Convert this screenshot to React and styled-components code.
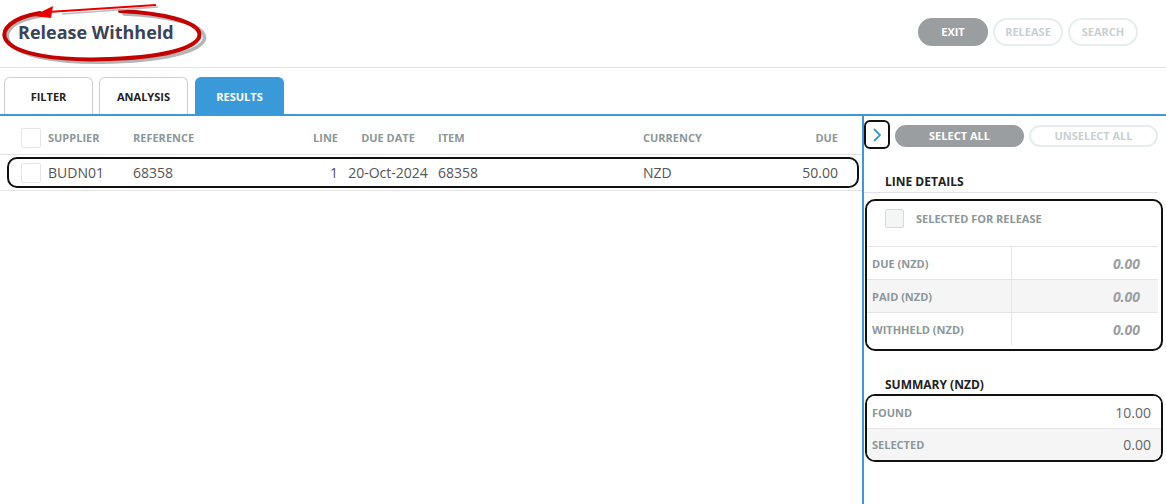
import React from "react";
import styled, { createGlobalStyle } from "styled-components";

const GlobalStyle = createGlobalStyle`
  html, body {
    margin: 0;
    padding: 0;
    background: #ffffff;
  }
  body {
    font-family: "Open Sans", "Liberation Sans", sans-serif;
    color: #555;
  }
  * {
    box-sizing: border-box;
  }
`;

const Page = styled.div`
  width: 1166px;
  height: 504px;
  display: flex;
  flex-direction: column;
  overflow: hidden;
`;

const Header = styled.header`
  position: relative;
  height: 68px;
  flex: none;
  display: flex;
  align-items: center;
  justify-content: space-between;
  padding: 0 28px 4px 18px;
  border-bottom: 1px solid #e4e4ee;
`;

const Title = styled.h1`
  margin: 0;
  font-size: 18px;
  font-weight: 700;
  color: #3b4358;
  position: relative;
  z-index: 1;
`;

const Circle = styled.svg`
  position: absolute;
  left: 0;
  top: 0;
  pointer-events: none;
`;

const Actions = styled.div`
  display: flex;
  gap: 5px;
`;

const Pill = styled.button`
  height: ${(p) => p.h || 28}px;
  width: ${(p) => p.w || 70}px;
  border-radius: 14px;
  font-family: inherit;
  font-size: 11px;
  font-weight: 700;
  text-transform: uppercase;
  padding: 0;
  cursor: pointer;
  background: ${(p) => (p.primary ? "#9b9ea1" : "#ffffff")};
  color: ${(p) => (p.primary ? "#ffffff" : "#c9cfd1")};
  border: 2px solid ${(p) => (p.primary ? "#9b9ea1" : "#e7ecec")};
`;

const Tabs = styled.nav`
  flex: none;
  height: 48px;
  display: flex;
  align-items: flex-end;
  gap: 6px;
  padding-left: 4px;
  border-bottom: 2px solid #3a9ad9;
`;

const Tab = styled.div`
  width: 89px;
  height: 37px;
  display: flex;
  align-items: center;
  justify-content: center;
  font-size: 11px;
  font-weight: 700;
  border-radius: 6px 6px 0 0;
  color: ${(p) => (p.active ? "#ffffff" : "#222")};
  background: ${(p) => (p.active ? "#3a9ad9" : "#ffffff")};
  border: 1px solid ${(p) => (p.active ? "#3a9ad9" : "#cfcfcf")};
  border-bottom: none;
  margin-left: ${(p) => (p.active ? 1 : 0)}px;
`;

const Body = styled.div`
  flex: 1;
  display: flex;
  min-height: 0;
`;

const Results = styled.section`
  width: 864px;
  border-right: 2px solid #3a9ad9;
`;

const cols = "27px 85px 167px 38px 100px 205px 97px 98px";

const HeadRow = styled.div`
  height: 39px;
  display: grid;
  grid-template-columns: ${cols};
  align-items: center;
  padding: 5px 0 0 21px;
  border-bottom: 1px solid #e3e3e3;
`;

const HeadCell = styled.div`
  font-size: 11px;
  font-weight: 700;
  color: #8c9799;
  text-align: ${(p) => p.align || "left"};
`;

const Row = styled.div`
  height: 36px;
  padding: 2px 3px 2px 7px;
  border-bottom: 1px solid #e3e3e3;
`;

const RowBox = styled.div`
  height: 100%;
  display: grid;
  grid-template-columns: ${cols};
  align-items: center;
  padding-left: 12px;
  border: 2px solid #111;
  border-radius: 10px;
`;

const Cell = styled.div`
  font-size: 14px;
  color: #555;
  text-align: ${(p) => p.align || "left"};
`;

const Check = styled.span`
  display: block;
  width: ${(p) => p.size || 20}px;
  height: ${(p) => p.size || 20}px;
  border: 1px solid ${(p) => p.color || "#e6e6e6"};
  background: ${(p) => p.bg || "#fff"};
  border-radius: 2px;
`;

const Side = styled.aside`
  flex: 1;
  padding: 4px 4px 0 0;
`;

const SideBar = styled.div`
  display: flex;
  align-items: center;
  gap: 5px;
`;

const Toggle = styled.div`
  width: 26px;
  height: 29px;
  border: 2px solid #111;
  border-radius: 6px;
  display: flex;
  align-items: center;
  justify-content: center;
`;

const SideButtons = styled.div`
  display: flex;
  gap: 5px;
  padding-top: 2px;
`;

const Heading = styled.h2`
  margin: ${(p) => p.mt}px 4px 0 0;
  padding: 0 0 ${(p) => (p.line ? 2 : 0)}px 21px;
  font-size: 12px;
  font-weight: 700;
  color: #222;
  border-bottom: ${(p) => (p.line ? "1px solid #e2e2ee" : "none")};
  line-height: 16px;
`;

const Box = styled.div`
  margin: ${(p) => p.mt}px -1px 0 1px;
  padding-bottom: ${(p) => p.pb || 0}px;
  border: 2px solid #111;
  border-radius: 10px;
  overflow: hidden;
`;

const CheckLine = styled.label`
  height: 45px;
  display: flex;
  align-items: flex-start;
  gap: 12px;
  padding: 8px 0 0 18px;
  font-size: 11px;
  font-weight: 700;
  line-height: 19px;
  color: #8c9799;
`;

const DetailRow = styled.div`
  height: 33px;
  display: grid;
  grid-template-columns: 145px 1fr;
  border-top: 1px solid #e4e4e4;
  background: ${(p) => (p.shade ? "#f5f5f5" : "#ffffff")};
  margin-right: 3px;
`;

const Label = styled.div`
  display: flex;
  align-items: center;
  padding-left: 5px;
  font-size: 11px;
  font-weight: 700;
  color: #8c9799;
  border-right: ${(p) => (p.split ? "1px solid #e4e4e4" : "none")};
`;

const Value = styled.div`
  display: flex;
  align-items: center;
  justify-content: flex-end;
  padding-right: ${(p) => p.pr || 18}px;
  font-size: 14px;
  font-weight: ${(p) => (p.italic ? 700 : 400)};
  font-style: ${(p) => (p.italic ? "italic" : "normal")};
  color: ${(p) => (p.italic ? "#9aa0a3" : "#666")};
`;

const SummaryRow = styled(DetailRow)`
  grid-template-columns: 1fr 1fr;
  border-top: ${(p) => (p.first ? "none" : "1px solid #e4e4e4")};
  height: 32px;
  margin-right: 0;
`;

const columns = [
  { key: "supplier", label: "SUPPLIER" },
  { key: "reference", label: "REFERENCE" },
  { key: "line", label: "LINE", align: "right" },
  { key: "date", label: "DUE DATE", align: "center" },
  { key: "item", label: "ITEM" },
  { key: "currency", label: "CURRENCY" },
  { key: "due", label: "DUE", align: "right" },
];

const rows = [
  {
    supplier: "BUDN01",
    reference: "68358",
    line: "1",
    date: "20-Oct-2024",
    item: "68358",
    currency: "NZD",
    due: "50.00",
  },
];

export default function App() {
  return (
    <Page>
      <GlobalStyle />
      <Header>
        <Circle width="215" height="68" viewBox="0 0 215 68">
          <path
            d="M40 16 C 12 21, 5 31, 8 40 C 16 57, 62 64, 112 62 C 172 60, 209 49, 204 35 C 200 24, 170 16, 124 14"
            fill="none"
            stroke="#b5b5b5"
            strokeWidth="3.5"
            strokeLinecap="round"
          />
          <path
            d="M40 13 C 10 18, 2 30, 5 38 C 12 55, 60 61, 110 59 C 170 57, 204 46, 199 32 C 195 22, 165 13, 120 11"
            fill="none"
            stroke="#c40000"
            strokeWidth="4"
            strokeLinecap="round"
          />
          <path d="M158 7 L62 14" stroke="#bbb" strokeWidth="1.4" fill="none" />
          <path d="M156 5 L48 12" stroke="#e80000" strokeWidth="2.2" fill="none" />
          <polygon points="33,16 53,6 51,18" fill="#e80000" />
        </Circle>
        <Title>Release Withheld</Title>
        <Actions>
          <Pill primary>Exit</Pill>
          <Pill>Release</Pill>
          <Pill>Search</Pill>
        </Actions>
      </Header>

      <Tabs>
        <Tab>FILTER</Tab>
        <Tab>ANALYSIS</Tab>
        <Tab active>RESULTS</Tab>
      </Tabs>

      <Body>
        <Results>
          <HeadRow>
            <Check />
            {columns.map((c) => (
              <HeadCell key={c.key} align={c.align}>
                {c.label}
              </HeadCell>
            ))}
          </HeadRow>
          {rows.map((r, i) => (
            <Row key={i}>
              <RowBox>
                <Check />
                {columns.map((c) => (
                  <Cell key={c.key} align={c.align}>
                    {r[c.key]}
                  </Cell>
                ))}
              </RowBox>
            </Row>
          ))}
        </Results>

        <Side>
          <SideBar>
            <Toggle>
              <svg width="10" height="16" viewBox="0 0 10 16">
                <path d="M2 2 L8 8 L2 14" fill="none" stroke="#3a9ad9" strokeWidth="1.8" />
              </svg>
            </Toggle>
            <SideButtons>
              <Pill primary w={129} h={22}>
                Select All
              </Pill>
              <Pill w={129} h={22}>
                Unselect All
              </Pill>
            </SideButtons>
          </SideBar>

          <Heading mt={25} line>
            LINE DETAILS
          </Heading>
          <Box mt={6} pb={4}>
            <CheckLine>
              <Check size={19} color="#d5dada" bg="#f4f5f5" />
              SELECTED FOR RELEASE
            </CheckLine>
            <DetailRow>
              <Label split>DUE (NZD)</Label>
              <Value italic>0.00</Value>
            </DetailRow>
            <DetailRow shade>
              <Label split>PAID (NZD)</Label>
              <Value italic>0.00</Value>
            </DetailRow>
            <DetailRow>
              <Label split>WITHHELD (NZD)</Label>
              <Value italic>0.00</Value>
            </DetailRow>
          </Box>

          <Heading mt={26}>SUMMARY (NZD)</Heading>
          <Box mt={1}>
            <SummaryRow first>
              <Label>FOUND</Label>
              <Value pr={10}>10.00</Value>
            </SummaryRow>
            <SummaryRow shade>
              <Label>SELECTED</Label>
              <Value pr={10}>0.00</Value>
            </SummaryRow>
          </Box>
        </Side>
      </Body>
    </Page>
  );
}
